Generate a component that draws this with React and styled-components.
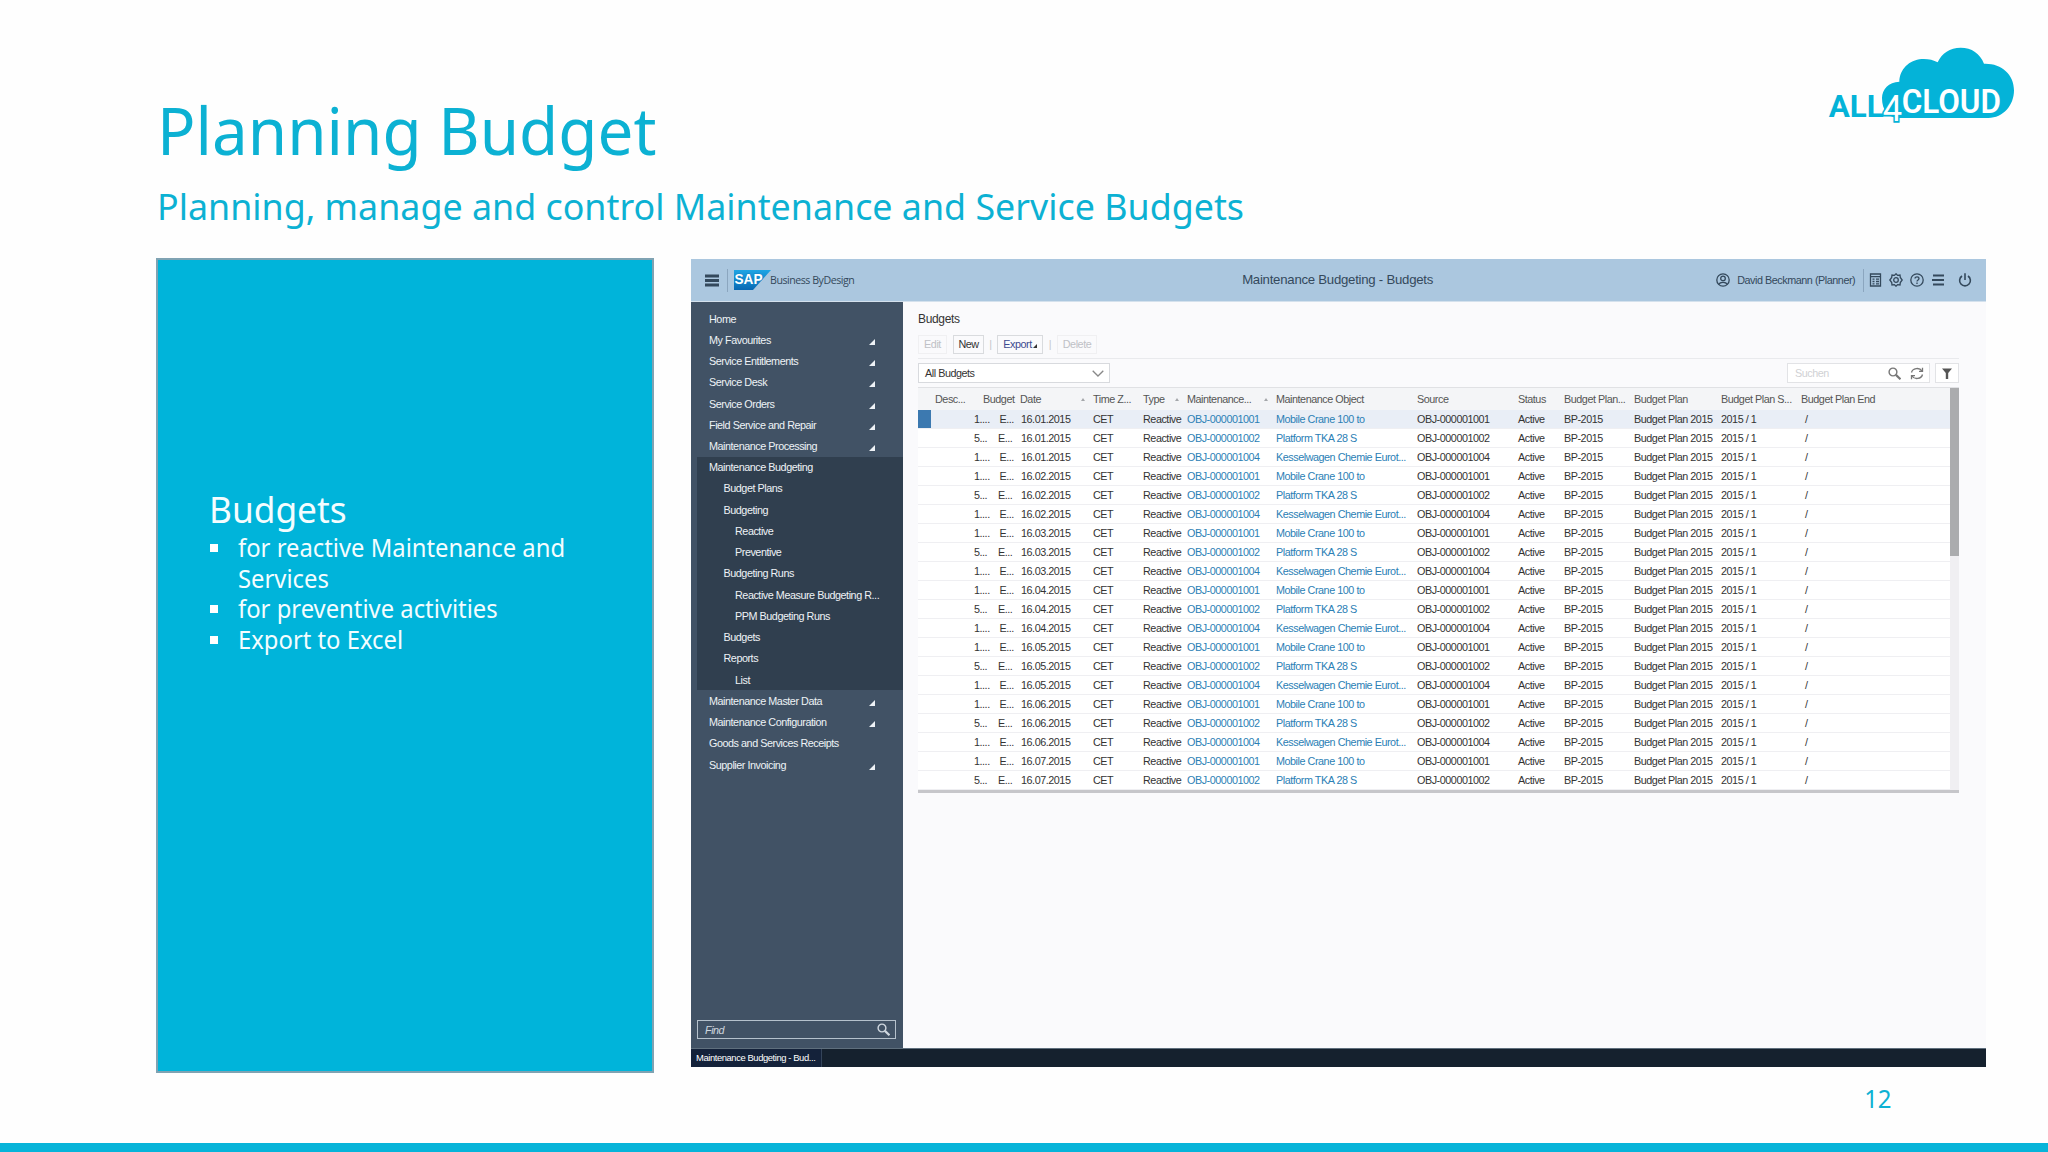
import React from 'react';
import styled, { createGlobalStyle } from 'styled-components';

const GlobalStyle = createGlobalStyle`
  * {
    box-sizing: border-box;
  }

  body {
    margin: 0;
    background: #fefefe;
  }
`;

const Slide = styled.div`
  display: flex;
  flex-direction: column;
  width: 2048px;
  height: 1152px;
  overflow: hidden;
  background: #fefefe;
  font-family: 'Noto Sans', 'Open Sans', sans-serif;
  color: #0cb1d3;
`;

const SlideHeader = styled.header`
  display: flex;
  justify-content: space-between;
  height: 258px;
  padding-left: 157px;
`;

const Title = styled.h1`
  margin: 84px 0 0;
  font-size: 66px;
  font-weight: 400;
  line-height: 90px;
  white-space: nowrap;
  transform: scaleX(0.966);
  transform-origin: left;
`;

const Subtitle = styled.h2`
  margin: 7px 0 0;
  font-size: 37px;
  font-weight: 400;
  line-height: 50px;
  white-space: nowrap;
  transform: scaleX(0.968);
  transform-origin: left;
`;

const Logo = styled.svg`
  width: 248px;
  height: 110px;
  margin-top: 30px;
`;

const SlideBody = styled.main`
  display: flex;
  height: 815px;
  padding-left: 156px;
  gap: 37px;
`;

const Panel = styled.section`
  width: 498px;
  height: 815px;
  padding: 227px 50px 0 52px;
  border: 2px solid #7fa3b3;
  background: #00b4da;
  color: #f4fdff;
`;

const PanelTitle = styled.h3`
  margin: 0 0 2px -1px;
  font-size: 37px;
  font-weight: 400;
  line-height: 44px;
  transform: scaleX(0.953);
  transform-origin: left;
`;

const Points = styled.ul`
  margin: 0;
  padding: 0;
  list-style: none;
`;

const Point = styled.li`
  display: flex;
  gap: 20px;
  font-size: 24.5px;
  line-height: 30.7px;

  &::before {
    content: '';
    flex: none;
    width: 8px;
    height: 8px;
    margin-top: 11px;
    background: #fff;
  }
`;

const PointText = styled.span`
  flex: none;
  width: 350px;
  transform: scaleX(0.972);
  transform-origin: left;
`;

const SlideFooter = styled.footer`
  display: flex;
  flex: 1;
  justify-content: flex-end;
  padding: 7px 156px 0 0;
  border-bottom: 9px solid #07b4d9;
  font-size: 25px;
  line-height: 36px;
`;

const PageNumber = styled.span`
  transform: scaleX(0.96);
  transform-origin: right;
`;

const Window = styled.section`
  display: flex;
  flex-direction: column;
  width: 1295px;
  height: 808px;
  margin-top: 1px;
  background: #fafafc;
  font-family: 'Liberation Sans', Arial, sans-serif;
  font-size: 10.8px;
  letter-spacing: -0.46px;
  line-height: 14px;
  color: #333;
  white-space: nowrap;
`;

const Shell = styled.div`
  display: flex;
  align-items: center;
  height: 43px;
  padding: 0 14px;
  border-bottom: 1px solid #d4e1ed;
  background: #abc7df;
  color: #34495c;
`;

const ShellDivider = styled.span`
  width: 1px;
  height: 23px;
  background: #8ba6bf;
`;

const Brand = styled.span`
  width: 473px;
  margin-left: -7px;
  font-family: 'Open Sans', sans-serif;
  font-size: 10.6px;
`;

const ShellTitle = styled.span`
  width: 475px;
  font-size: 13.2px;
  letter-spacing: -0.25px;
`;

const UserName = styled.span`
  width: 133px;
  padding-left: 7px;
`;

const Icon = styled.svg`
  flex: none;
  display: block;
  fill: none;
  stroke: currentColor;
  stroke-width: 1.3;
`;

const ShellIcons = styled.div`
  display: flex;
  align-items: center;
  gap: 7px;
  padding-left: 5px;
`;

const WorkArea = styled.div`
  display: flex;
  flex: 1;
  min-height: 0;
`;

const Sidebar = styled.nav`
  display: flex;
  flex-direction: column;
  width: 212px;
  padding: 6px 0 9px;
  background: #415265;
  color: #eef2f6;
`;

const NavGroup = styled.div`
  margin-left: 6px;
  background: ${(props) => (props.$open ? '#303f4f' : 'transparent')};
`;

const NavItem = styled.div`
  display: flex;
  align-items: center;
  justify-content: space-between;
  height: 21.24px;
  padding: 0 28px 0 ${(props) => [12, 26.5, 38][props.$level]}px;
`;

const Corner = styled.span`
  width: 0;
  height: 0;
  border-left: ${(props) => props.$size}px solid transparent;
  border-bottom: ${(props) => props.$size}px solid currentColor;
`;

const NavCorner = styled(Corner)`
  margin-top: 4px;
`;

const FindBox = styled.div`
  display: flex;
  align-items: center;
  justify-content: space-between;
  height: 19px;
  margin: auto 7px 0 6px;
  padding: 0 5px 0 7px;
  border: 1px solid #b5c1cc;
  color: #cfd7df;
  font-style: italic;
`;

const Content = styled.div`
  flex: 1;
  padding: 9px 27px 0 15px;
`;

const PageTitle = styled.div`
  height: 24px;
  font-size: 12px;
  letter-spacing: -0.35px;
  line-height: 16px;
`;

const Toolbar = styled.div`
  display: flex;
  align-items: center;
  height: 24px;
  padding-bottom: 5px;
  border-bottom: 1px solid #e9eaed;
`;

const ToolButton = styled.span`
  display: flex;
  align-items: center;
  justify-content: center;
  width: ${(props) => props.$width}px;
  height: 19px;
  border: 1px solid ${(props) => (props.$disabled ? '#f0f0f2' : '#d9dbde')};
  color: ${(props) => (props.$disabled ? '#bfc1c6' : props.$accent ? '#3d4a8f' : '#333')};
`;

const ButtonCorner = styled(Corner)`
  margin: 4px 0 0 1px;
  color: #333;
`;

const ToolGap = styled.span`
  width: ${(props) => props.$width}px;
  color: #c6c8cc;
  text-align: center;
`;

const FilterBar = styled.div`
  display: flex;
  align-items: center;
  height: 28px;
`;

const Select = styled.div`
  display: flex;
  align-items: center;
  justify-content: space-between;
  width: 192px;
  height: 20px;
  margin-right: auto;
  padding: 0 5px 0 6px;
  border: 1px solid #d8dade;
  background: #fff;
`;

const SearchBox = styled.div`
  display: flex;
  align-items: center;
  width: 143px;
  height: 20px;
  margin-right: 5px;
  padding: 0 5px 0 7px;
  gap: 9px;
  border: 1px solid #e2e3e6;
  background: #fff;
  color: #777;
`;

const Placeholder = styled.span`
  flex: 1;
  color: #d0d1d4;
`;

const FilterButton = styled.div`
  display: flex;
  align-items: center;
  justify-content: center;
  width: 24px;
  height: 20px;
  border: 1px solid #e2e3e6;
  background: #fff;
  color: #555;
`;

const TableFrame = styled.div`
  display: flex;
  border-top: 1px solid #e0e1e4;
  border-bottom: 3px solid #c6c6ca;
`;

const Table = styled.div`
  flex: 1;
  background: #fff;
`;

const HeaderRow = styled.div`
  display: grid;
  grid-template-columns: 17px 48px 37px 73px 50px 44px 89px 141px 101px 46px 70px 87px 80px 1fr;
  align-items: center;
  height: 21.5px;
  background: #f4f5f7;
  color: #555;
`;

const HeaderCell = styled.span`
  display: flex;
  align-items: center;
  justify-content: space-between;
  padding-right: 8px;
`;

const SortMark = styled.span`
  width: 0;
  height: 0;
  margin-top: 2px;
  border-left: 2.5px solid transparent;
  border-right: 2.5px solid transparent;
  border-bottom: 3px solid #a5a7ab;
`;

const Row = styled.div`
  display: grid;
  grid-template-columns: 76px 27px 72px 50px 44px 89px 141px 101px 46px 70px 87px 80px 1fr;
  align-items: center;
  height: 19.05px;
  border-bottom: 1px solid #efeff2;
  background: ${(props) => (props.$selected ? '#e9eef6' : '#fff')};
`;

const AmountCell = styled.span`
  height: 18px;
  padding-left: 43px;
  border-left: 13px solid ${(props) => (props.$selected ? '#3c79b0' : 'transparent')};
  line-height: 18px;
`;

const Cell = styled.span`
  padding-left: ${(props) => props.$indent || 0}px;
  color: ${(props) => (props.$link ? '#2b80b5' : '#333')};
`;

const ScrollTrack = styled.div`
  width: 9px;
  background: #f0eff2;
`;

const ScrollThumb = styled.div`
  height: 168px;
  background: #abacae;
`;

const TaskBar = styled.div`
  height: 19px;
  border-top: 1px solid #5f6f7d;
  background: #15212e;
`;

const Task = styled.div`
  width: 131px;
  height: 18px;
  padding-left: 5px;
  border-right: 1px solid #34445a;
  background: #14223a;
  color: #fff;
  font-size: 9.4px;
  letter-spacing: -0.4px;
  line-height: 18px;
`;

const navBefore = [
  { label: 'Home' },
  { label: 'My Favourites', more: true },
  { label: 'Service Entitlements', more: true },
  { label: 'Service Desk', more: true },
  { label: 'Service Orders', more: true },
  { label: 'Field Service and Repair', more: true },
  { label: 'Maintenance Processing', more: true },
];

const navOpen = [
  { label: 'Maintenance Budgeting', level: 0 },
  { label: 'Budget Plans', level: 1 },
  { label: 'Budgeting', level: 1 },
  { label: 'Reactive', level: 2 },
  { label: 'Preventive', level: 2 },
  { label: 'Budgeting Runs', level: 1 },
  { label: 'Reactive Measure Budgeting R...', level: 2 },
  { label: 'PPM Budgeting Runs', level: 2 },
  { label: 'Budgets', level: 1 },
  { label: 'Reports', level: 1 },
  { label: 'List', level: 2 },
];

const navAfter = [
  { label: 'Maintenance Master Data', more: true },
  { label: 'Maintenance Configuration', more: true },
  { label: 'Goods and Services Receipts' },
  { label: 'Supplier Invoicing', more: true },
];

const headers = [
  { label: '' },
  { label: 'Desc...' },
  { label: 'Budget' },
  { label: 'Date', sort: true },
  { label: 'Time Z...' },
  { label: 'Type', sort: true },
  { label: 'Maintenance...', sort: true },
  { label: 'Maintenance Object' },
  { label: 'Source' },
  { label: 'Status' },
  { label: 'Budget Plan...' },
  { label: 'Budget Plan' },
  { label: 'Budget Plan S...' },
  { label: 'Budget Plan End' },
];

const objects = [
  { id: 'OBJ-000001001', name: 'Mobile Crane 100 to', amount: '1....' },
  { id: 'OBJ-000001002', name: 'Platform TKA 28 S', amount: '5...' },
  { id: 'OBJ-000001004', name: 'Kesselwagen Chemie Eurot...', amount: '1....' },
];

// one budget line per object and month
const rows = Array.from({ length: 20 }, (_, i) => ({
  ...objects[i % 3],
  date: `16.0${Math.floor(i / 3) + 1}.2015`,
}));

const All4CloudLogo = () => (
  <Logo viewBox="0 0 744 330" fontFamily="Roboto, sans-serif">
    <path
      fill="#04b3d8"
      d="M298 264H565C610 264 642 226 642 181C642 132 603 99 552 101C540 70 515 53 482 53C450 53 425 70 413 97C400 89 382 86 365 87C327 90 299 118 298 155C266 156 246 178 246 204C246 240 264 264 298 264Z"
    />
    <text x="86" y="261" fontSize="96" fontWeight="700" fill="#04b3d8" textLength="165" lengthAdjust="spacingAndGlyphs">
      ALL
    </text>
    <text x="248" y="274" fontSize="112" fontWeight="400" fill="#fff" stroke="#04b3d8" strokeWidth="10" paintOrder="stroke" textLength="58" lengthAdjust="spacingAndGlyphs">
      4
    </text>
    <text x="305" y="250" fontSize="98" fontWeight="600" fill="#fff" textLength="298" lengthAdjust="spacingAndGlyphs">
      CLOUD
    </text>
  </Logo>
);

const SapIcon = styled.svg`
  display: block;
  flex: none;
  margin-left: 6px;
`;

const SapLogo = () => (
  <SapIcon width="43" height="20" viewBox="0 0 43 20">
    <defs>
      <linearGradient id="sap" x1="0" y1="0" x2="0" y2="1">
        <stop offset="0" stopColor="#1fa5e4" />
        <stop offset="1" stopColor="#0868b3" />
      </linearGradient>
    </defs>
    <path d="M0 0H37L19 20H0Z" fill="url(#sap)" />
    <text x="0.5" y="14" fontFamily="Liberation Sans, sans-serif" fontSize="15" fontWeight="700" letterSpacing="0" fill="#fff" stroke="#1584c8" strokeWidth="1.2" paintOrder="stroke" textLength="28" lengthAdjust="spacingAndGlyphs">
      SAP
    </text>
  </SapIcon>
);

const MenuIcon = styled(Icon)`
  margin-right: 8px;
`;

const PowerIcon = styled(Icon)`
  margin-left: 7px;
`;

const SearchIcon = ({ size }) => (
  <Icon width={size} height={size} viewBox="0 0 12 12">
    <circle cx="4.6" cy="4.6" r="3.6" />
    <path d="M7.3 7.3L11.5 11.3" strokeWidth="2" />
  </Icon>
);

const ShellBar = () => (
  <Shell>
    <MenuIcon width="14" height="13" viewBox="0 0 14 13">
      <path d="M0 2H14M0 6.5H14M0 11H14" strokeWidth="2.8" />
    </MenuIcon>
    <ShellDivider />
    <SapLogo />
    <Brand>Business ByDesign</Brand>
    <ShellTitle>Maintenance Budgeting - Budgets</ShellTitle>
    <Icon width="14" height="14" viewBox="0 0 14 14">
      <circle cx="7" cy="7" r="6.2" />
      <circle cx="7" cy="5.4" r="2.3" />
      <path d="M2.8 11.4C4 8.6 10 8.6 11.2 11.4" />
    </Icon>
    <UserName>David Beckmann (Planner)</UserName>
    <ShellDivider />
    <ShellIcons>
      <Icon width="13" height="14" viewBox="0 0 13 14">
        <path d="M1.5 1H11.5V13H1.5ZM1.5 3.7H11.5M3.5 6.2H5.5M7 6.2H10M3.5 8.5H5.5M7 8.5H10M3.5 10.8H5.5M7 10.8H10" />
      </Icon>
      <Icon width="14" height="14" viewBox="0 0 14 14">
        <path d="M7 0.8L8.6 2.4L11 2L11.3 4.4L13.2 7L11.3 9.6L11 12L8.6 11.6L7 13.2L5.4 11.6L3 12L2.7 9.6L0.8 7L2.7 4.4L3 2L5.4 2.4Z" />
        <circle cx="7" cy="7" r="2.3" />
      </Icon>
      <Icon width="14" height="14" viewBox="0 0 14 14">
        <circle cx="7" cy="7" r="6.2" />
        <path d="M5 5.6C5 3.2 9 3.2 9 5.6C9 7 7 6.9 7 8.6M7 9.6V10.9" />
      </Icon>
      <Icon width="13" height="12" viewBox="0 0 13 12">
        <path d="M2 1.5H13M1 6H13M2 10.5H13" strokeWidth="2" />
      </Icon>
      <PowerIcon width="14" height="14" viewBox="0 0 14 14">
        <path d="M4 3A5.4 5.4 0 1 0 10 3M7 0.3V7" strokeWidth="1.6" />
      </PowerIcon>
    </ShellIcons>
  </Shell>
);

const NavList = ({ items }) =>
  items.map((item) => (
    <NavItem key={item.label} $level={item.level || 0}>
      {item.label}
      {item.more && <NavCorner $size={6} />}
    </NavItem>
  ));

const BudgetTable = () => (
  <TableFrame>
    <Table>
      <HeaderRow>
        {headers.map((header, i) => (
          <HeaderCell key={i}>
            {header.label}
            {header.sort && <SortMark />}
          </HeaderCell>
        ))}
      </HeaderRow>
      {rows.map((row, i) => (
        <Row key={i} $selected={i === 0}>
          <AmountCell $selected={i === 0}>{row.amount}</AmountCell>
          <Cell $indent={row.amount === '5...' ? 4 : 5.5}>E...</Cell>
          <Cell>{row.date}</Cell>
          <Cell>CET</Cell>
          <Cell>Reactive</Cell>
          <Cell $link>{row.id}</Cell>
          <Cell $link>{row.name}</Cell>
          <Cell>{row.id}</Cell>
          <Cell>Active</Cell>
          <Cell>BP-2015</Cell>
          <Cell>Budget Plan 2015</Cell>
          <Cell>2015 / 1</Cell>
          <Cell $indent={4}>/</Cell>
        </Row>
      ))}
    </Table>
    <ScrollTrack>
      <ScrollThumb />
    </ScrollTrack>
  </TableFrame>
);

const BudgetsPage = () => (
  <Content>
    <PageTitle>Budgets</PageTitle>
    <Toolbar>
      <ToolButton $width={29} $disabled>Edit</ToolButton>
      <ToolGap $width={6} />
      <ToolButton $width={31}>New</ToolButton>
      <ToolGap $width={13}>|</ToolGap>
      <ToolButton $width={46} $accent>
        Export
        <ButtonCorner $size={4} />
      </ToolButton>
      <ToolGap $width={14}>|</ToolGap>
      <ToolButton $width={40} $disabled>Delete</ToolButton>
    </Toolbar>
    <FilterBar>
      <Select>
        All Budgets
        <Icon width="12" height="7" viewBox="0 0 12 7">
          <path d="M0.7 0.7L6 6L11.3 0.7" stroke="#888" />
        </Icon>
      </Select>
      <SearchBox>
        <Placeholder>Suchen</Placeholder>
        <SearchIcon size={13} />
        <Icon width="14" height="13" viewBox="0 0 14 13">
          <path d="M1.5 5.5C2.5 1 9.5 0 12 4M12.5 0.8V4.3H9M12.5 7.5C11.5 12 4.5 13 2 9M1.5 12.2V8.7H5" />
        </Icon>
      </SearchBox>
      <FilterButton>
        <Icon width="10" height="11" viewBox="0 0 10 11">
          <path d="M0 0.5H10L6.2 5V11H3.8V5Z" fill="currentColor" stroke="none" />
        </Icon>
      </FilterButton>
    </FilterBar>
    <BudgetTable />
  </Content>
);

const App = () => (
  <>
    <GlobalStyle />
    <Slide>
      <SlideHeader>
        <div>
          <Title>Planning Budget</Title>
          <Subtitle>Planning, manage and control Maintenance and Service Budgets</Subtitle>
        </div>
        <All4CloudLogo />
      </SlideHeader>
      <SlideBody>
        <Panel>
          <PanelTitle>Budgets</PanelTitle>
          <Points>
            <Point>
              <PointText>for reactive Maintenance and Services</PointText>
            </Point>
            <Point>
              <PointText>for preventive activities</PointText>
            </Point>
            <Point>
              <PointText>Export to Excel</PointText>
            </Point>
          </Points>
        </Panel>
        <Window>
          <ShellBar />
          <WorkArea>
            <Sidebar>
              <NavGroup>
                <NavList items={navBefore} />
              </NavGroup>
              <NavGroup $open>
                <NavList items={navOpen} />
              </NavGroup>
              <NavGroup>
                <NavList items={navAfter} />
              </NavGroup>
              <FindBox>
                Find
                <SearchIcon size={13} />
              </FindBox>
            </Sidebar>
            <BudgetsPage />
          </WorkArea>
          <TaskBar>
            <Task>Maintenance Budgeting - Bud...</Task>
          </TaskBar>
        </Window>
      </SlideBody>
      <SlideFooter>
        <PageNumber>12</PageNumber>
      </SlideFooter>
    </Slide>
  </>
);

export default App;
